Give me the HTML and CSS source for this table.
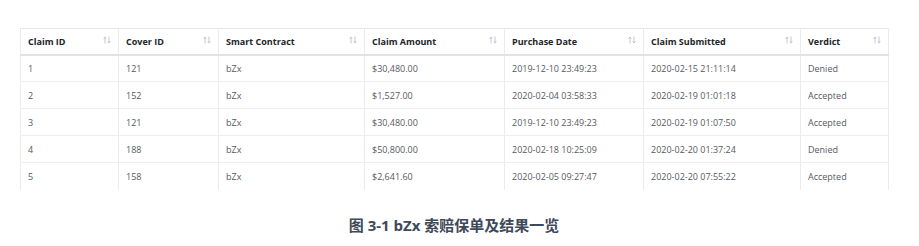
FILE: index.html
```html
<!DOCTYPE html>
<html lang="zh">
<head>
  <meta charset="UTF-8" />
  <meta name="viewport" content="width=device-width, initial-scale=1.0"/>
  <title>bZx 索赔保单及结果一览</title>
  <link rel="stylesheet" href="styles.css">
</head>
<body>

<div class="figure">
  <table class="claims">
    <colgroup>
      <col style="width: 98px">
      <col style="width: 100px">
      <col style="width: 146px">
      <col style="width: 140px">
      <col style="width: 139px">
      <col style="width: 157px">
      <col style="width: 88px">
    </colgroup>
    <thead>
      <tr>
        <th><span>Claim ID</span><svg class="sort" viewBox="0 0 8 8"><path d="M2 7.5V1M0.6 2.6L2 1l1.4 1.6M6 0.5V7M4.6 5.4L6 7l1.4-1.6"/></svg></th>
        <th><span>Cover ID</span><svg class="sort" viewBox="0 0 8 8"><path d="M2 7.5V1M0.6 2.6L2 1l1.4 1.6M6 0.5V7M4.6 5.4L6 7l1.4-1.6"/></svg></th>
        <th><span>Smart Contract</span><svg class="sort" viewBox="0 0 8 8"><path d="M2 7.5V1M0.6 2.6L2 1l1.4 1.6M6 0.5V7M4.6 5.4L6 7l1.4-1.6"/></svg></th>
        <th><span>Claim Amount</span><svg class="sort" viewBox="0 0 8 8"><path d="M2 7.5V1M0.6 2.6L2 1l1.4 1.6M6 0.5V7M4.6 5.4L6 7l1.4-1.6"/></svg></th>
        <th><span>Purchase Date</span><svg class="sort" viewBox="0 0 8 8"><path d="M2 7.5V1M0.6 2.6L2 1l1.4 1.6M6 0.5V7M4.6 5.4L6 7l1.4-1.6"/></svg></th>
        <th><span>Claim Submitted</span><svg class="sort" viewBox="0 0 8 8"><path d="M2 7.5V1M0.6 2.6L2 1l1.4 1.6M6 0.5V7M4.6 5.4L6 7l1.4-1.6"/></svg></th>
        <th><span>Verdict</span><svg class="sort" viewBox="0 0 8 8"><path d="M2 7.5V1M0.6 2.6L2 1l1.4 1.6M6 0.5V7M4.6 5.4L6 7l1.4-1.6"/></svg></th>
      </tr>
    </thead>
    <tbody>
      <tr><td>1</td><td>121</td><td>bZx</td><td>$30,480.00</td><td>2019-12-10 23:49:23</td><td>2020-02-15 21:11:14</td><td>Denied</td></tr>
      <tr><td>2</td><td>152</td><td>bZx</td><td>$1,527.00</td><td>2020-02-04 03:58:33</td><td>2020-02-19 01:01:18</td><td>Accepted</td></tr>
      <tr><td>3</td><td>121</td><td>bZx</td><td>$30,480.00</td><td>2019-12-10 23:49:23</td><td>2020-02-19 01:07:50</td><td>Accepted</td></tr>
      <tr><td>4</td><td>188</td><td>bZx</td><td>$50,800.00</td><td>2020-02-18 10:25:09</td><td>2020-02-20 01:37:24</td><td>Denied</td></tr>
      <tr><td>5</td><td>158</td><td>bZx</td><td>$2,641.60</td><td>2020-02-05 09:27:47</td><td>2020-02-20 07:55:22</td><td>Accepted</td></tr>
    </tbody>
  </table>

  <p class="caption">图 3-1 bZx 索赔保单及结果一览</p>
</div>

</body>
</html>
```

FILE: styles.css
```css
* {
  box-sizing: border-box;
}
body {
  margin: 0;
  background: #ffffff;
  font-family: 'Open Sans', 'Noto Sans CJK SC', sans-serif;
}
.figure {
  width: 868px;
  margin: 28px 0 0 20px;
}
.claims {
  width: 868px;
  table-layout: fixed;
  border-collapse: collapse;
  font-size: 9px;
}
.claims th,
.claims td {
  padding: 0 7px;
  border-left: 1px solid #e9ecef;
  border-right: 1px solid #e9ecef;
  text-align: left;
  white-space: nowrap;
}
.claims th {
  height: 26px;
  border-top: 1px solid #e3e6ea;
  border-bottom: 2px solid #dfe3e8;
  color: #212529;
  font-weight: 700;
}
.claims th span {
  display: inline-block;
}
.sort {
  float: right;
  width: 8px;
  height: 8px;
  margin-top: 1px;
  fill: none;
  stroke: #b9c3cd;
  stroke-width: 0.9;
}
.claims td {
  height: 27px;
  border-bottom: 1px solid #eceef1;
  color: #555b61;
}
.claims tbody tr:last-child td {
  border-bottom: none;
}
.caption {
  margin: 24px 0 0;
  text-align: center;
  font-size: 15px;
  font-weight: 700;
  color: #3e4959;
}
```
